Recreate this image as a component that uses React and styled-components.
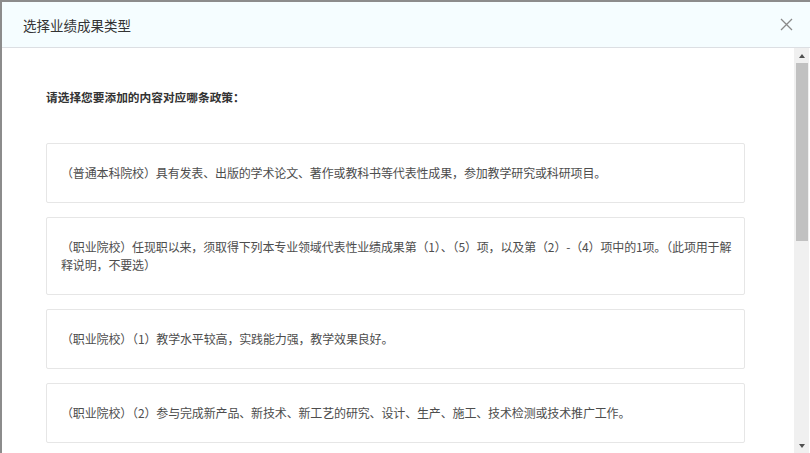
import React from 'react';
import styled, {createGlobalStyle} from 'styled-components';

const policies = [
	'（普通本科院校）具有发表、出版的学术论文、著作或教科书等代表性成果，参加教学研究或科研项目。',
	'（职业院校）任现职以来，须取得下列本专业领域代表性业绩成果第（1）、（5）项，以及第（2）-（4）项中的1项。（此项用于解释说明，不要选）',
	'（职业院校）（1）教学水平较高，实践能力强，教学效果良好。',
	'（职业院校）（2）参与完成新产品、新技术、新工艺的研究、设计、生产、施工、技术检测或技术推广工作。'
];

export default function App() {
	return (
		<>
			<GlobalStyle/>
			<Backdrop>
				<Dialog>
					<Header>
						<Title>选择业绩成果类型</Title>
						<Close aria-label="关闭">
							<svg width="13" height="13" viewBox="0 0 13 13">
								<path d="M1 1L12 12M12 1L1 12" stroke="#8a8a8a" strokeWidth="1.3" fill="none"/>
							</svg>
						</Close>
					</Header>
					<Body>
						<Content>
							<Question>请选择您要添加的内容对应哪条政策：</Question>
							<List>
								{policies.map(p => <Card key={p}>{p}</Card>)}
							</List>
						</Content>
						<ScrollBar>
							<ArrowButton><Arrow up/></ArrowButton>
							<Thumb/>
							<Track/>
							<ArrowButton><Arrow/></ArrowButton>
						</ScrollBar>
					</Body>
				</Dialog>
			</Backdrop>
		</>
	);
}

const GlobalStyle = createGlobalStyle`
	html, body {
		margin: 0;
		padding: 0;
		height: 100%;
		overflow: hidden;
	}
	#root {
		height: 100%;
	}
`;

const Backdrop = styled.div`
	height: 100vh;
	box-sizing: border-box;
	padding: 2px 0 0 2px;
	background-color: #8c8c8c;
	font-family: "Noto Sans CJK SC", "Liberation Sans", sans-serif;
`;

const Dialog = styled.div`
	display: flex;
	flex-direction: column;
	height: 100%;
	background-color: #fff;
`;

const Header = styled.div`
	display: flex;
	align-items: center;
	justify-content: space-between;
	flex: none;
	height: 45px;
	padding: 0 17px 0 21px;
	background-color: #f5fdff;
	border-bottom: 1px solid #dcdfe3;
`;

const Title = styled.h2`
	margin: 0;
	font-size: 13.5px;
	font-weight: normal;
	color: #333;
`;

const Close = styled.button`
	display: flex;
	padding: 0;
	border: 0;
	background: none;
	cursor: pointer;
`;

const Body = styled.div`
	display: flex;
	flex: 1;
	min-height: 0;
`;

const Content = styled.div`
	flex: 1;
	overflow: hidden;
	padding: 39px 49px 0 44px;
`;

const Question = styled.div`
	margin-bottom: 36px;
	font-size: 11.7px;
	line-height: 20px;
	font-weight: bold;
	color: #333;
`;

const List = styled.div`
	display: flex;
	flex-direction: column;
	gap: 14px;
`;

const Card = styled.div`
	padding: 20px 4px 20px 14px;
	border: 1px solid #e6e6e6;
	border-radius: 2px;
	font-size: 12px;
	line-height: 18px;
	letter-spacing: -0.15px;
	color: #4d4d4d;
	cursor: pointer;
`;

const ScrollBar = styled.div`
	display: flex;
	flex-direction: column;
	flex: none;
	width: 15px;
	margin-right: 1px;
	background-color: #f0f0f0;
`;

const ArrowButton = styled.div`
	display: flex;
	align-items: center;
	justify-content: center;
	flex: none;
	height: 15px;
`;

const Arrow = styled.span`
	width: 0;
	height: 0;
	border-left: 3.5px solid transparent;
	border-right: 3.5px solid transparent;
	${p => p.up ? 'border-bottom: 4px solid #505050;' : 'border-top: 4px solid #505050;'}
`;

const Thumb = styled.div`
	flex: none;
	height: 178px;
	margin: 0 1px 0 2px;
	background-color: #c1c1c1;
`;

const Track = styled.div`
	flex: 1;
`;
